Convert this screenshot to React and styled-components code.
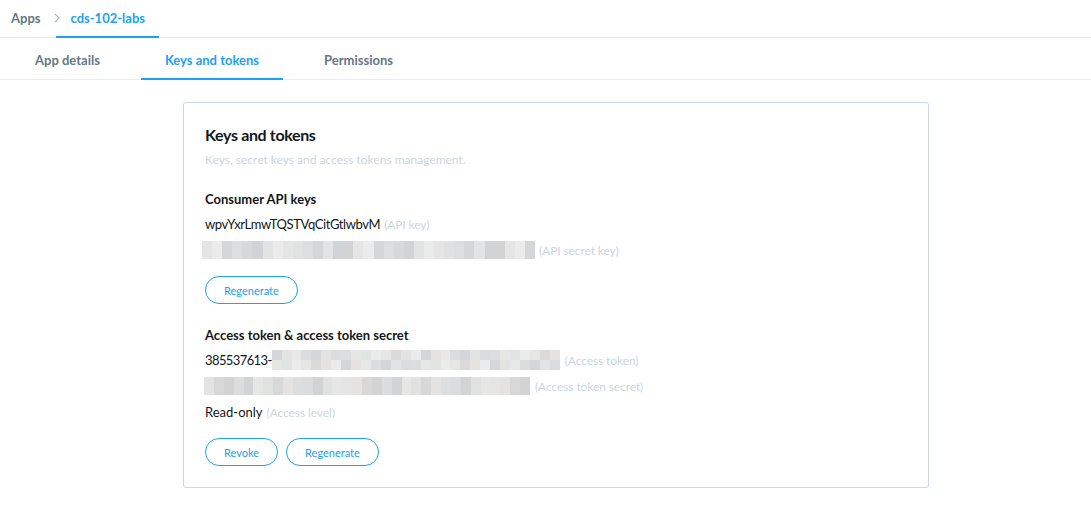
import React from 'react';
import styled, { createGlobalStyle } from 'styled-components';

const GlobalStyle = createGlobalStyle`
  body {
    margin: 0;
    background: #fff;
    font-family: Lato, "Open Sans", sans-serif;
    color: #14171a;
  }
`;

const Page = styled.div`
  width: 1091px;
  min-height: 505px;
  background: #fff;
`;

const Breadcrumbs = styled.nav`
  display: flex;
  align-items: stretch;
  height: 37px;
  padding-left: 11px;
  border-bottom: 1px solid #e6ecf0;
  font-size: 13px;
  font-weight: 700;
`;

const Crumb = styled.div`
  display: flex;
  align-items: center;
  color: ${(p) => (p.$active ? '#1da1f2' : '#657786')};
  padding: ${(p) => (p.$active ? '0 14px 0 15px' : '0')};
  margin-left: ${(p) => (p.$active ? '-4px' : '0')};
  border-bottom: 2px solid ${(p) => (p.$active ? '#1da1f2' : 'transparent')};
  margin-bottom: -1px;
`;

const Chevron = styled.svg`
  align-self: center;
  width: 6px;
  height: 10px;
  margin-left: 13px;
  margin-bottom: 2px;
`;

const Tabs = styled.nav`
  display: flex;
  height: 41px;
  padding-left: 11px;
  gap: 17px;
  border-bottom: 1px solid #e6ecf0;
`;

const Tab = styled.div`
  display: flex;
  align-items: center;
  padding: 4px 24px 0;
  font-size: 13px;
  font-weight: 700;
  color: ${(p) => (p.$active ? '#1da1f2' : '#657786')};
  border-bottom: 2px solid ${(p) => (p.$active ? '#1da1f2' : 'transparent')};
  margin-bottom: -1px;
`;

const Content = styled.main`
  padding: 22px 0 16px 183px;
`;

const Card = styled.section`
  width: 746px;
  box-sizing: border-box;
  border: 1px solid #ccd6dd;
  border-radius: 3px;
  padding: 21px;
`;

const Title = styled.h2`
  margin: 0;
  font-size: 16px;
  line-height: 22px;
  font-weight: 700;
  letter-spacing: -0.35px;
  color: #14171a;
`;

const Subtitle = styled.p`
  margin: 6px 0 0;
  font-size: 12px;
  line-height: 16px;
  color: #ccd6dd;
`;

const SectionTitle = styled.h3`
  margin: 21px 0 2px;
  font-size: 13px;
  line-height: 20px;
  font-weight: 700;
  color: #14171a;
`;

const Row = styled.div`
  display: flex;
  align-items: center;
  height: 26px;
  font-size: 13px;
  color: #14171a;
`;

const Value = styled.span`
  letter-spacing: ${(p) => p.$tight || 0}px;
`;

const Hint = styled.span`
  margin-left: ${(p) => p.$gap || 4}px;
  font-size: 12px;
  letter-spacing: -0.1px;
  color: #ccd6dd;
`;

const Redacted = styled.span`
  display: inline-grid;
  grid-template-rows: repeat(${(p) => p.$rows}, 1fr);
  grid-template-columns: repeat(${(p) => p.$cols}, 1fr);
  grid-auto-flow: column;
  width: ${(p) => p.$width}px;
  height: ${(p) => p.$height}px;
  margin-left: ${(p) => p.$offset || 0}px;
`;

const Pixel = styled.span`
  background: ${(p) => p.$shade};
`;

const Actions = styled.div`
  display: flex;
  gap: 8px;
  margin-top: 13px;
`;

const Button = styled.button`
  height: 28px;
  padding: 0 18px;
  border: 1px solid #1da1f2;
  border-radius: 14px;
  background: #fff;
  color: #1da1f2;
  font-family: inherit;
  font-size: 11px;
  cursor: pointer;

  &:hover {
    background: #e8f5fe;
  }
`;

const shades = ['#dddddd', '#e2e3e3', '#d8d8d8', '#e5e5e5', '#dbdcdd', '#e8e8e8', '#d5d6d7', '#e0e1e1', '#d2d3d4', '#e4e3e1', '#dadada', '#ebebeb', '#d3d3d3', '#dddedf', '#e6e6e5'];

const pixels = (count, seed) =>
  Array.from({ length: count }, (_, i) => shades[(i * 7 + seed * 3 + ((i * i) % 5)) % shades.length]);

const Blur = ({ width, height, rows = 1, offset, seed }) => {
  const cols = Math.round(width / 10);
  return (
    <Redacted $rows={rows} $cols={cols} $width={width} $height={height} $offset={offset}>
      {pixels(cols * rows, seed).map((c, i) => (
        <Pixel key={i} $shade={c} />
      ))}
    </Redacted>
  );
};

const App = () => (
  <Page>
    <GlobalStyle />
    <Breadcrumbs>
      <Crumb>Apps</Crumb>
      <Chevron viewBox="0 0 6 10">
        <path d="M1 1l4 4-4 4" fill="none" stroke="#aab8c2" strokeWidth="1.2" />
      </Chevron>
      <Crumb $active>cds-102-labs</Crumb>
    </Breadcrumbs>
    <Tabs>
      <Tab>App details</Tab>
      <Tab $active>Keys and tokens</Tab>
      <Tab>Permissions</Tab>
    </Tabs>
    <Content>
      <Card>
        <Title>Keys and tokens</Title>
        <Subtitle>Keys, secret keys and access tokens management.</Subtitle>

        <SectionTitle>Consumer API keys</SectionTitle>
        <Row>
          <Value $tight={-0.4}>wpvYxrLmwTQSTVqCitGtlwbvM</Value>
          <Hint>(API key)</Hint>
        </Row>
        <Row>
          <Blur width={333} height={18} offset={-3} seed={1} />
          <Hint>(API secret key)</Hint>
        </Row>
        <Actions>
          <Button>Regenerate</Button>
        </Actions>

        <SectionTitle>Access token &amp; access token secret</SectionTitle>
        <Row>
          <Value $tight={-0.6}>385537613-</Value>
          <Blur width={288} height={20} rows={2} seed={2} />
          <Hint $gap={5}>(Access token)</Hint>
        </Row>
        <Row>
          <Blur width={326} height={18} offset={-1} seed={3} />
          <Hint $gap={5}>(Access token secret)</Hint>
        </Row>
        <Row>
          <Value>Read-only</Value>
          <Hint>(Access level)</Hint>
        </Row>
        <Actions>
          <Button>Revoke</Button>
          <Button>Regenerate</Button>
        </Actions>
      </Card>
    </Content>
  </Page>
);

export default App;
